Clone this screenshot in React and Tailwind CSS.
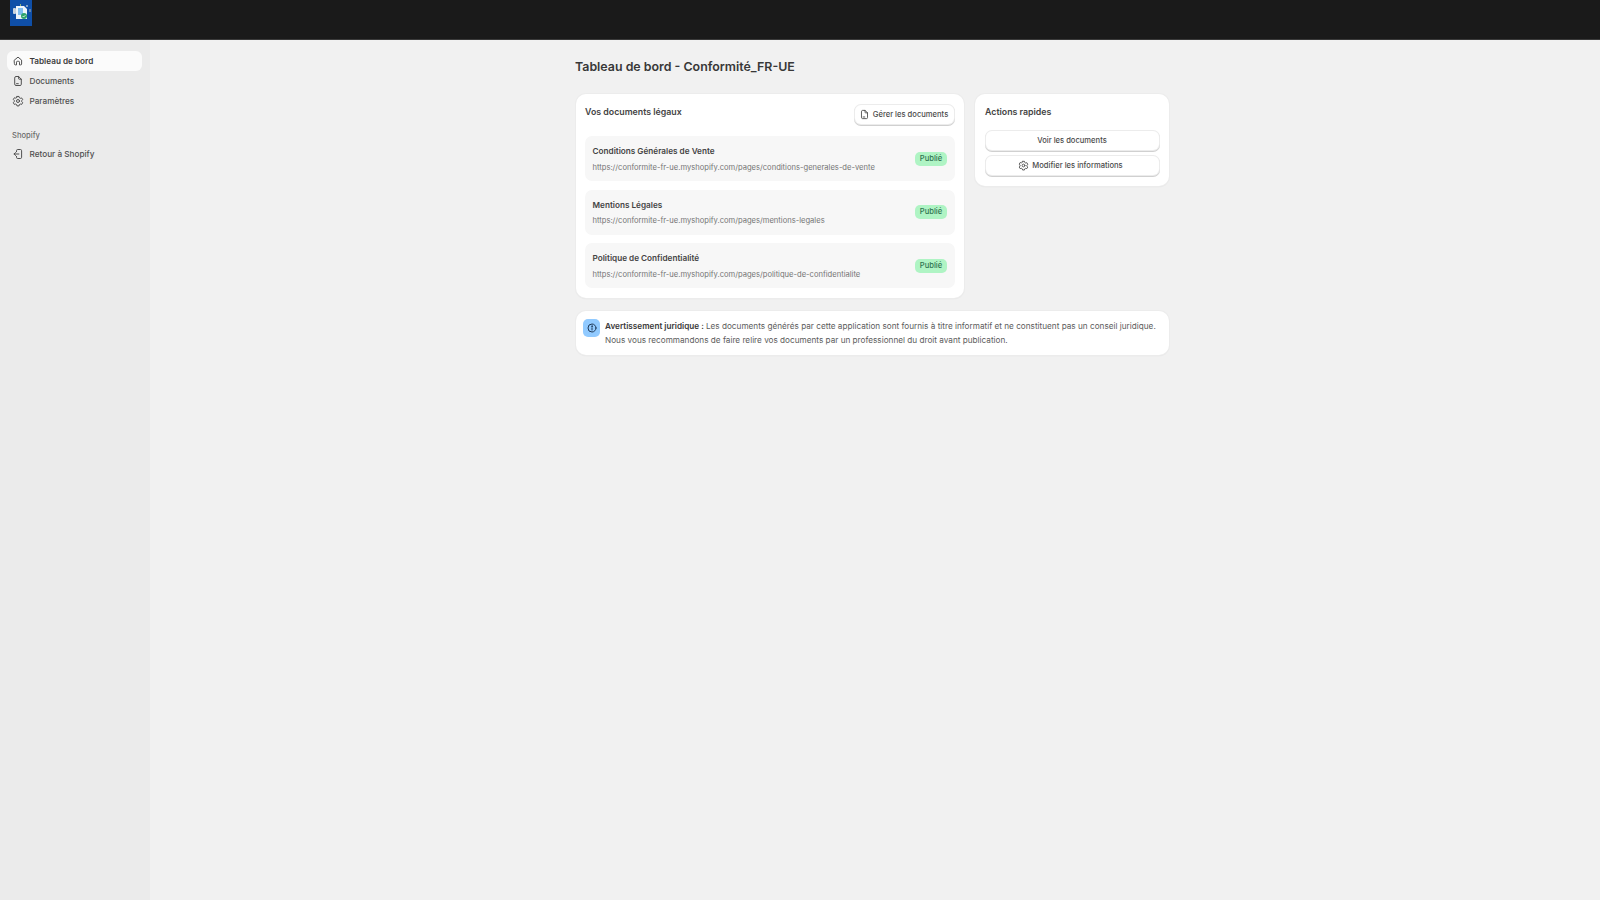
import React from "react";

function Logo() {
  return (
    <svg width="22" height="26" viewBox="0 0 22 26" className="block">
      <rect width="22" height="26" fill="#0f4fa8" />
      <rect x="3" y="8" width="3" height="6" rx="1" fill="#c9d3de" />
      <path d="M6 6h8l3 3v10H6z" fill="#eef4fb" />
      <rect x="8" y="8" width="5" height="7" fill="#7fbdf0" />
      <circle cx="14" cy="16" r="3" fill="#2fa36b" />
      <path d="M12.6 16l1 1 1.8-1.8" stroke="#fff" strokeWidth="0.8" fill="none" />
      <rect x="16" y="5" width="2" height="2" fill="#7f9ec2" />
      <rect x="19" y="9" width="2" height="3" fill="#5d7fa8" />
      <rect x="10" y="4" width="1" height="2" fill="#8fb37a" />
    </svg>
  );
}

const Svg = ({ size = 12, children }) => (
  <svg width={size} height={size} viewBox="0 0 20 20" fill="none" stroke="#4a4a4a" strokeWidth="1.6" strokeLinecap="round" strokeLinejoin="round" className="shrink-0">
    {children}
  </svg>
);
const HomeIcon = ({ size }) => (
  <Svg size={size}>
    <path d="M4 8.500 10 3.500l6 5V15a1.500 1.500 0 0 1-1.500 1.500h-2V12a1.500 1.500 0 0 0-1.500-1.500H9A1.500 1.500 0 0 0 7.500 12v4.500h-2A1.500 1.500 0 0 1 4 15z" />
  </Svg>
);
const PageIcon = ({ size }) => (
  <Svg size={size}>
    <path d="M4.500 4.500A2 2 0 0 1 6.500 2.500h4.500l4.500 4.500v8.500a2 2 0 0 1-2 2h-7a2 2 0 0 1-2-2z" />
    <path d="M11 2.500V6a1 1 0 0 0 1 1h3.500" />
    <path d="M7.500 14.500h3" />
  </Svg>
);
const GearIcon = ({ size }) => (
  <Svg size={size}>
    <path d="M8.300 2.500h3.400l.6 2.200 1.600.9 2.200-.6 1.700 2.900-1.600 1.600v1.800l1.600 1.600-1.700 2.900-2.200-.6-1.600.9-.6 2.200H8.300l-.6-2.200-1.600-.9-2.200.6-1.700-2.900L3.800 11V9.200L2.200 7.600l1.700-2.900 2.200.6 1.600-.9z" transform="translate(0 -.1)" />
    <circle cx="10" cy="10" r="2.500" />
  </Svg>
);
const ExitIcon = ({ size }) => (
  <Svg size={size}>
    <path d="M7.500 6V4.500a2 2 0 0 1 2-2H14a2 2 0 0 1 2 2v11a2 2 0 0 1-2 2H9.500a2 2 0 0 1-2-2V14" />
    <path d="M11.500 10H3.500M6 7.500 3.500 10 6 12.500" />
  </Svg>
);
const InfoIcon = () => (
  <svg width="10" height="10" viewBox="0 0 20 20" fill="none" stroke="#1f3a5a" strokeWidth="2" strokeLinecap="round">
    <circle cx="10" cy="10" r="8" />
    <path d="M10 9.500v4.500" />
    <circle cx="10" cy="6.300" r=".6" fill="#1f3a5a" />
  </svg>
);

function NavItem({ icon: Icon, label, active }) {
  return (
    <div className={`mx-[7px] flex h-5 w-[135px] items-center gap-[5.5px] rounded-[6px] pl-[5px] text-[8.2px] leading-none whitespace-nowrap ${active ? "bg-[#fbfbfb] font-semibold text-[#3a3a3a]" : "font-medium text-[#4f4f4f]"}`}>
      <Icon size={12} />
      <span>{label}</span>
    </div>
  );
}

function DocRow({ title, url }) {
  return (
    <div className="flex h-[45px] items-center justify-between rounded-[7px] bg-[#f7f7f7] pl-[7.5px] pr-2">
      <div className="flex flex-col gap-[6.5px] pt-[1.5px] whitespace-nowrap">
        <div className="text-[8.2px] font-semibold leading-[10px] text-[#444444]">{title}</div>
        <div className="text-[7.6px] leading-[10px] text-[#757575]">{url}</div>
      </div>
      <span className="flex h-[14px] w-8 items-center justify-center rounded-[5px] bg-[#aff4c4] text-[7.6px] font-medium text-[#2f7350]">Publié</span>
    </div>
  );
}

const btn = "flex items-center justify-center whitespace-nowrap rounded-[6px] bg-white text-[7.6px] font-medium text-[#4a4a4a] shadow-[0_0_0_1px_#ececec,0_1px_0_1px_#d0d0d0]";
const card = "rounded-[10px] bg-white shadow-[0_0_0_1px_#ececec,0_1px_1px_#d4d4d4]";

export default function App() {
  return (
    <div className="flex h-[900px] w-[1600px] flex-col overflow-hidden bg-[#f1f1f1] font-['Inter',sans-serif]">
      <header className="h-10 shrink-0 border-b border-[#3a3a3a] bg-[#1a1a1a] pl-[10px]">
        <Logo />
      </header>
      <div className="flex min-h-0 flex-1">
        <aside className="w-[150px] shrink-0 bg-[#ebebeb] pt-[11px]">
          <NavItem icon={HomeIcon} label="Tableau de bord" active />
          <NavItem icon={PageIcon} label="Documents" />
          <NavItem icon={GearIcon} label="Paramètres" />
          <div className="mt-[16px] pl-3 text-[7.6px] font-medium leading-[17px] text-[#6b6b6b]">Shopify</div>
          <NavItem icon={ExitIcon} label="Retour à Shopify" />
        </aside>
        <main className="pl-[425px] pt-[18px]">
          <div className="w-[594px]">
            <h1 className="text-[12.4px] font-semibold leading-[17px] text-[#383838]">Tableau de bord - Conformité_FR-UE</h1>
            <div className="mt-[19px] ml-px flex items-start gap-[11px]">
              <section className={`${card} h-[204px] w-[388px] px-[9px] pt-[11px]`}>
                <div className="flex justify-between">
                  <h2 className="pt-px text-[8.8px] font-semibold leading-[12px] text-[#444444]">Vos documents légaux</h2>
                  <button className={`${btn} mr-px h-[19px] w-[99px] gap-[3px] pr-[2px]`}>
                    <PageIcon size={11} />
                    Gérer les documents
                  </button>
                </div>
                <div className="mt-[12px] flex flex-col gap-[8.5px]">
                  <DocRow title="Conditions Générales de Vente" url="https://conformite-fr-ue.myshopify.com/pages/conditions-generales-de-vente" />
                  <DocRow title="Mentions Légales" url="https://conformite-fr-ue.myshopify.com/pages/mentions-legales" />
                  <DocRow title="Politique de Confidentialité" url="https://conformite-fr-ue.myshopify.com/pages/politique-de-confidentialite" />
                </div>
              </section>
              <section className={`${card} h-[92px] w-[194px] px-[10px] pt-[12px]`}>
                <h2 className="text-[8.8px] font-semibold leading-[12px] text-[#444444]">Actions rapides</h2>
                <div className="mx-[0.5px] mt-[13px] flex flex-col gap-[6px]">
                  <button className={`${btn} h-[19px] w-full`}>Voir les documents</button>
                  <button className={`${btn} h-[19px] w-full gap-[3px] pr-[3px]`}>
                    <GearIcon size={11} />
                    Modifier les informations
                  </button>
                </div>
              </section>
            </div>
            <section className={`${card} mt-[13px] ml-px flex h-[44px] w-[593px] gap-[5px] pl-[7px] pt-[8px]`}>
              <span className="flex h-[18px] w-[17px] shrink-0 items-center justify-center rounded-[5px] bg-[#91caff]">
                <InfoIcon />
              </span>
              <p className="text-[8.2px] leading-[14px] whitespace-nowrap text-[#5c5c5c]">
                <strong className="font-semibold text-[#3a3a3a]">Avertissement juridique : </strong>
                Les documents générés par cette application sont fournis à titre informatif et ne constituent pas un conseil juridique.
                <br />
                Nous vous recommandons de faire relire vos documents par un professionnel du droit avant publication.
              </p>
            </section>
          </div>
        </main>
      </div>
    </div>
  );
}
